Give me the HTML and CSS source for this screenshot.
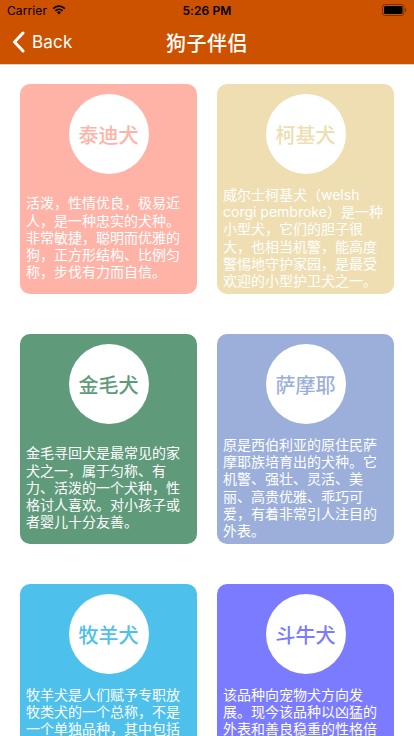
FILE: index.html
```html
<!DOCTYPE html>
<html lang="zh-CN">
<head>
<meta charset="utf-8">
<title>狗子伴侣</title>
<link rel="stylesheet" href="styles.css">
</head>
<body>
<div class="screen">
  <header class="topbar">
    <div class="status">
      <div class="status-left">
        <span class="carrier">Carrier</span>
        <svg class="wifi" width="14" height="10" viewBox="0 0 14 10">
          <path d="M7 9.6 L4.9 7.3 A3 3 0 0 1 9.1 7.3 Z" fill="#000"/>
          <path d="M2.9 5.2 A5.8 5.8 0 0 1 11.1 5.2 L9.9 6.5 A4.1 4.1 0 0 0 4.1 6.5 Z" fill="#000"/>
          <path d="M0.6 2.9 A9 9 0 0 1 13.4 2.9 L12.2 4.2 A7.3 7.3 0 0 0 1.8 4.2 Z" fill="#000"/>
        </svg>
      </div>
      <div class="status-time">5:26 PM</div>
      <div class="status-right">
        <svg class="battery" width="25" height="12" viewBox="0 0 25 12">
          <rect x="0.5" y="0.5" width="21.5" height="11" rx="2.8" fill="none" stroke="rgba(0,0,0,0.4)" stroke-width="1"/>
          <rect x="2" y="2" width="18.5" height="8" rx="1.5" fill="#000"/>
          <path d="M23.2 4 Q24.5 4.3 24.5 6 Q24.5 7.7 23.2 8 Z" fill="rgba(0,0,0,0.4)"/>
        </svg>
      </div>
    </div>
    <nav class="navbar">
      <a class="back" href="#">
        <svg class="chevron" width="13" height="22" viewBox="0 0 13 22">
          <path d="M11 2 L2.5 11 L11 20" fill="none" stroke="#fff" stroke-width="3" stroke-linecap="round" stroke-linejoin="round"/>
        </svg>
        <span>Back</span>
      </a>
      <h1 class="title">狗子伴侣</h1>
      <span class="nav-spacer"></span>
    </nav>
  </header>

  <main class="grid">
    <article class="card card--teddy">
      <div class="badge">泰迪犬</div>
      <div class="desc"><p>活泼，性情优良，极易近人，是一种忠实的犬种。非常敏捷，聪明而优雅的狗，正方形结构、比例匀称，步伐有力而自信。</p></div>
    </article>
    <article class="card card--corgi">
      <div class="badge">柯基犬</div>
      <div class="desc"><p>威尔士柯基犬（welsh corgi pembroke）是一种小型犬，它们的胆子很大，也相当机警，能高度警惕地守护家园，是最受欢迎的小型护卫犬之一。</p></div>
    </article>
    <article class="card card--golden">
      <div class="badge">金毛犬</div>
      <div class="desc"><p>金毛寻回犬是最常见的家犬之一，属于匀称、有力、活泼的一个犬种，性格讨人喜欢。对小孩子或者婴儿十分友善。</p></div>
    </article>
    <article class="card card--samoyed">
      <div class="badge">萨摩耶</div>
      <div class="desc"><p>原是西伯利亚的原住民萨摩耶族培育出的犬种。它机警、强壮、灵活、美丽、高贵优雅、乖巧可爱，有着非常引人注目的外表。</p></div>
    </article>
    <article class="card card--shepherd">
      <div class="badge">牧羊犬</div>
      <div class="desc"><p>牧羊犬是人们赋予专职放牧类犬的一个总称，不是一个单独品种，其中包括许多品种的犬，如苏格兰牧羊犬、德国牧羊犬、边境牧羊犬等。</p></div>
    </article>
    <article class="card card--bulldog">
      <div class="badge">斗牛犬</div>
      <div class="desc"><p>该品种向宠物犬方向发展。现今该品种以凶猛的外表和善良稳重的性格倍受人们喜爱，是一种非常受欢迎的家庭伴侣犬，适合城市饲养。</p></div>
    </article>
  </main>
</div>
</body>
</html>
```

FILE: styles.css
```css
* {
  box-sizing: border-box;
}

html, body {
  margin: 0;
  padding: 0;
  background: #ffffff;
}

body {
  font-family: "Noto Sans CJK SC", "Noto Sans", sans-serif;
}

.screen {
  width: 414px;
  height: 736px;
  overflow: hidden;
  background: #ffffff;
}

/* ---------- top bar ---------- */
.topbar {
  background: #cc5200;
  border-bottom: 1px solid #d4d4d4;
}

.status {
  height: 20px;
  display: grid;
  grid-template-columns: 1fr auto 1fr;
  align-items: center;
  padding: 0 7px;
  font-family: Inter, "Liberation Sans", sans-serif;
  font-size: 12px;
  color: #000;
}

.status-left {
  display: flex;
  align-items: center;
  gap: 5px;
}

.carrier {
  font-weight: 400;
  letter-spacing: 0.1px;
}

.wifi {
  display: block;
  margin-top: -1px;
}

.status-time {
  font-weight: 600;
  letter-spacing: 0.1px;
}

.status-right {
  display: flex;
  justify-content: flex-end;
}

.battery {
  display: block;
}

.navbar {
  height: 44px;
  display: grid;
  grid-template-columns: 1fr auto 1fr;
  align-items: center;
  color: #ffffff;
}

.back {
  display: flex;
  align-items: center;
  gap: 7px;
  padding-left: 12px;
  color: #ffffff;
  text-decoration: none;
  font-family: Inter, "Liberation Sans", sans-serif;
  font-size: 17px;
  letter-spacing: 0.2px;
}

.chevron {
  display: block;
}

.title {
  margin: 0;
  font-size: 20px;
  font-weight: 500;
  letter-spacing: 0.5px;
  color: #ffffff;
}

/* ---------- cards ---------- */
.grid {
  display: grid;
  grid-template-columns: 177px 177px;
  column-gap: 20px;
  row-gap: 40px;
  padding: 19px 20px 0 20px;
}

.card {
  height: 210px;
  border-radius: 10px;
  display: flex;
  flex-direction: column;
  align-items: center;
  background: var(--c);
}

.badge {
  width: 80px;
  height: 80px;
  margin-top: 10px;
  border-radius: 50%;
  background: #ffffff;
  color: var(--c);
  display: flex;
  align-items: center;
  justify-content: center;
  font-size: 20px;
  font-weight: 500;
  flex: none;
}

.desc {
  flex: 1;
  align-self: stretch;
  display: flex;
  align-items: center;
  padding: 7px 6px 0 6px;
}

.desc p {
  margin: 0;
  width: 100%;
  color: #ffffff;
  font-family: Inter, "Noto Sans CJK SC", sans-serif;
  font-size: 14px;
  line-height: 17.3px;
}

.card--teddy    { --c: #ffb3a7; }
.card--corgi    { --c: #eedeb2; }
.card--golden   { --c: #5f9b7b; }
.card--samoyed  { --c: #9bafda; }
.card--shepherd { --c: #4dc1ec; }
.card--bulldog  { --c: #7b7bff; }
```
